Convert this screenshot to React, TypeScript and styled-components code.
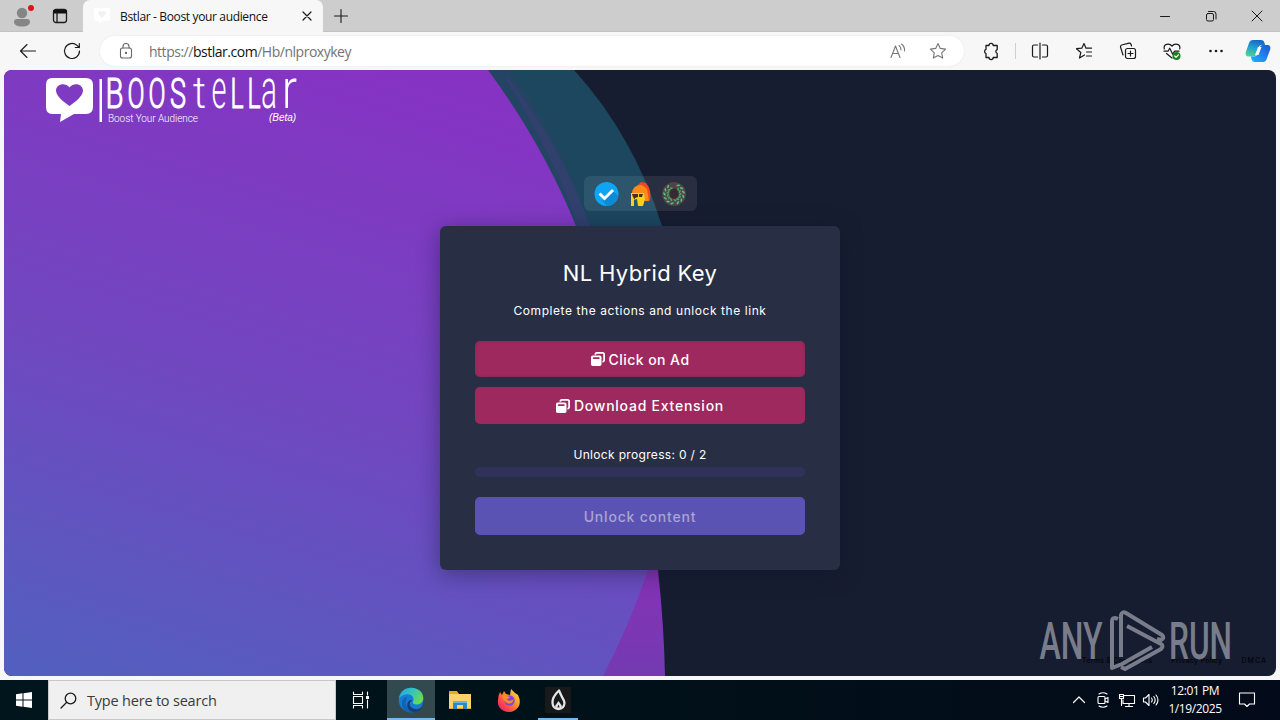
import type { ReactNode } from "react";
import { FaWindowRestore } from "react-icons/fa6";
import styled, { createGlobalStyle } from "styled-components";

const GlobalStyle = createGlobalStyle`
  * {
    box-sizing: border-box;
  }

  body {
    margin: 0;
    overflow: hidden;
    font-family: "Open Sans", "Noto Sans", sans-serif;
  }

  svg {
    display: block;
    flex: none;
  }
`;

const Desktop = styled.div`
  display: flex;
  flex-direction: column;
  width: 1280px;
  height: 720px;
  background: #f7f7f7;
`;

/* browser chrome */

const TabStrip = styled.header`
  display: flex;
  height: 32px;
  background: #cdcdcd;
  box-shadow: inset 0 -1px #c2c2c2;
`;

const Slot = styled.div<{ $width: number }>`
  display: flex;
  flex: none;
  align-items: center;
  justify-content: center;
  width: ${({ $width }) => $width}px;
`;

const Tab = styled.div`
  display: flex;
  align-items: center;
  width: 240px;
  padding: 0 10px 0 11px;
  background: #f7f7f7;
  border-radius: 7px 7px 0 0;
`;

const TabTitle = styled.span`
  flex: 1;
  margin-left: 10px;
  font-size: 12px;
  letter-spacing: -0.35px;
  white-space: nowrap;
  color: #111;
`;

const WindowButtons = styled.div`
  display: flex;
  margin-left: auto;
`;

const Toolbar = styled.div`
  display: flex;
  align-items: center;
  height: 38px;
  padding-left: 6px;
`;

const AddressBar = styled.div`
  display: flex;
  align-items: center;
  width: 864px;
  height: 30px;
  margin-left: 6px;
  padding: 0 6px 0 8px;
  border-radius: 15px;
  background: #fff;
  box-shadow: 0 0 2px #e2e2e2;
`;

const Url = styled.span`
  flex: 1;
  margin-left: 5px;
  font-size: 14px;
  letter-spacing: -0.48px;
  color: #737373;

  & b {
    font-weight: 400;
    color: #111;
  }
`;

const Separator = styled.i`
  width: 1px;
  height: 16px;
  margin: 0 1px 0 -3px;
  background: #cfcfcf;
`;

/* web page */

const Page = styled.main`
  position: relative;
  display: flex;
  flex-direction: column;
  align-items: center;
  height: 606px;
  margin: 0 4px 4px;
  padding-top: 106px;
  border-radius: 8px;
  overflow: hidden;
  background: #171d31;
  color: #fff;
`;

const Backdrop = styled.svg`
  position: absolute;
  inset: 0;
`;

const Brand = styled.svg`
  position: absolute;
  top: 0;
  left: 36px;
  overflow: visible;
`;

const Badges = styled.div`
  position: relative;
  display: flex;
  align-items: center;
  gap: 8px;
  width: 113px;
  height: 35px;
  padding: 0 10px;
  border-radius: 6px;
  background: rgba(255, 255, 255, 0.08);
`;

const Card = styled.section`
  position: relative;
  display: flex;
  flex-direction: column;
  width: 400px;
  height: 344px;
  margin-top: 15px;
  padding: 32px 35px 0;
  border-radius: 6px;
  background: #282f45;
  box-shadow: 0 4px 22px rgba(10, 14, 40, 0.4);
  text-align: center;
`;

const Title = styled.h1`
  margin: 0;
  font-family: Inter, sans-serif;
  font-size: 22px;
  font-weight: 400;
  line-height: 30px;
  letter-spacing: 0.35px;
`;

const Text = styled.p`
  margin: 0;
  font-family: Inter, sans-serif;
  font-size: 12px;
  line-height: 16px;
  letter-spacing: 0.33px;
`;

const Subtitle = styled(Text)`
  margin: 15px 0 22px;
  letter-spacing: 0.57px;
`;

const ActionButton = styled.button<{ $pressed?: boolean }>`
  display: flex;
  flex: none;
  align-items: center;
  justify-content: center;
  gap: 4px;
  height: ${({ $pressed }) => ($pressed ? 36 : 37)}px;
  margin: 0 0 10px;
  padding: 0;
  border: 0;
  border-radius: 5px;
  background: #9e295f;
  box-shadow: ${({ $pressed }) =>
    $pressed ? "inset 0 0 3px #7c2a50" : "none"};
  font-family: Inter, sans-serif;
  font-size: 14px;
  font-weight: 500;
  letter-spacing: ${({ $pressed }) => ($pressed ? 0.45 : 0.75)}px;
  color: #fff;
`;

const Progress = styled(Text)`
  margin-top: 13px;
`;

const ProgressBar = styled.div`
  flex: none;
  height: 10px;
  margin: 4px 0 20px;
  border-radius: 5px;
  background: #30325a;
`;

const UnlockButton = styled(ActionButton)`
  height: 38px;
  background: #5b53b4;
  letter-spacing: 0.8px;
  color: #aaa4d3;
`;

const FooterLinks = styled.footer`
  display: flex;
  align-self: flex-end;
  gap: 19px;
  margin: auto 9px 10px 0;
  font-family: Inter, sans-serif;
  font-size: 7px;
  font-weight: 600;
  line-height: 11px;
  letter-spacing: 0.25px;
  color: #05070d;

  & span:last-child {
    letter-spacing: 1px;
  }
`;

const Watermark = styled.svg`
  position: absolute;
  right: 40px;
  bottom: 0;
`;

/* taskbar */

const Taskbar = styled.nav`
  display: flex;
  height: 40px;
  background: linear-gradient(90deg, #00151c, #001219 40%, #030a19);
  color: #fff;
`;

const SearchBox = styled.div`
  display: flex;
  align-items: center;
  gap: 10px;
  width: 288px;
  padding-left: 11px;
  border: 1px solid #c8c8c8;
  background: #f0f0f0;
  font-size: 14.5px;
  letter-spacing: -0.2px;
  color: #3a3a3a;
`;

const TaskButton = styled.div<{ $active?: boolean; $running?: boolean }>`
  display: flex;
  align-items: center;
  justify-content: center;
  width: 48px;
  margin-right: 1px;
  background: ${({ $active }) => ($active ? "#334950" : "transparent")};
  background-image: ${({ $active, $running }) =>
    $active || $running ? "linear-gradient(#76b9ed, #76b9ed)" : "none"};
  background-repeat: no-repeat;
  background-position: bottom;
  background-size: ${({ $active }) => ($active ? "48px" : "40px")} 2px;
`;

const Tray = styled.div`
  display: flex;
  margin-left: auto;
  padding-right: 5px;
`;

const Clock = styled.div`
  display: flex;
  flex-direction: column;
  align-items: center;
  width: 64px;
  padding-top: 2px;
  font-size: 12px;
  line-height: 18px;
  letter-spacing: -0.4px;
  white-space: nowrap;
`;

interface IconProps {
  width?: number;
  height?: number;
  color?: string;
  stroke?: number;
  children: ReactNode;
}

const Icon = ({
  width = 20,
  height = 20,
  color = "#1b1b1b",
  stroke = 1.1,
  children,
}: IconProps) => (
  <svg
    width={width}
    height={height}
    viewBox={`0 0 ${width} ${height}`}
    fill="none"
    stroke={color}
    strokeWidth={stroke}
    strokeLinecap="round"
    strokeLinejoin="round"
  >
    {children}
  </svg>
);

const starPath =
  "M10 2.5l2.3 4.9 5.3.7-3.9 3.7 1 5.3-4.7-2.6-4.7 2.6 1-5.3-3.9-3.7 5.3-.7z";

const BrowserTabs = () => (
  <TabStrip>
    <Slot $width={44}>
      <Icon width={28} height={28} stroke={0}>
        <circle cx="14" cy="11" r="5.2" fill="#858585" />
        <path d="M6 20c0-2 1-3 3-3h10c2 0 3 1 3 3 0 3-4 4.600-8 4.600S6 23 6 20z" fill="#858585" />
        <circle cx="23" cy="6" r="3" fill="#d9161c" />
      </Icon>
    </Slot>
    <Slot $width={32}>
      <Icon width={16} height={16} stroke={1.3}>
        <rect x="1.500" y="1.500" width="13" height="13" rx="2.500" />
        <path d="M2 3h12M2 4.500h12" stroke="#111" strokeWidth="2" />
        <path d="M5 5v9" />
      </Icon>
    </Slot>
    <Slot $width={7} />
    <Tab>
      <Icon width={16} height={16} stroke={0}>
        <path d="M2 0h12q2 0 2 2v9q0 2-2 2H9l-4 3v-3H2q-2 0-2-2V2q0-2 2-2z" fill="#fff" />
        <path d="M8 10L4.500 6.500Q3.500 3 6.500 3L8 4.200 9.500 3q3 0 2 3.500z" fill="#f3f0f5" />
      </Icon>
      <TabTitle>Bstlar - Boost your audience</TabTitle>
      <Icon width={12} height={12} stroke={1.2}>
        <path d="M2 2l8 8M10 2l-8 8" />
      </Icon>
    </Tab>
    <Slot $width={36}>
      <Icon width={16} height={16}>
        <path d="M8 1.500v13M1.500 8h13" />
      </Icon>
    </Slot>
    <WindowButtons>
      <Slot $width={46}>
        <Icon width={12} height={12} stroke={1}>
          <path d="M1.500 6.500h9" />
        </Icon>
      </Slot>
      <Slot $width={46}>
        <Icon width={12} height={12} stroke={1}>
          <rect x="1.500" y="3.500" width="7" height="7.500" rx="1.500" />
          <path d="M3.500 1.500h5q2.500 0 2.500 2.500v5" />
        </Icon>
      </Slot>
      <Slot $width={46}>
        <Icon width={12} height={12} stroke={1}>
          <path d="M1 1l10 10M11 1L1 11" />
        </Icon>
      </Slot>
    </WindowButtons>
  </TabStrip>
);

const Copilot = () => (
  <svg width="26" height="24" viewBox="0 0 26 24">
    <defs>
      <linearGradient id="copilotLeft" x1="0.5" y1="0" x2="0.2" y2="1">
        <stop offset="0" stopColor="#1668c8" />
        <stop offset="0.5" stopColor="#21a6cf" />
        <stop offset="1" stopColor="#52d58b" />
      </linearGradient>
      <linearGradient id="copilotRight" x1="1" y1="0" x2="0" y2="1">
        <stop offset="0" stopColor="#1c59c9" />
        <stop offset="0.5" stopColor="#2382f0" />
        <stop offset="1" stopColor="#14b8f5" />
      </linearGradient>
    </defs>
    <path d="M8 1h8c2 0 3 1 3.500 3l.7 2H17c-2 0-3 1-3.500 2.500L11 16c-.5 1-1.500 1.500-2.500 1.500H4c-3 0-4-2-3-5L4 4c.7-2 2-3 4-3z" fill="url(#copilotLeft)" />
    <path d="M18 23h-8c-2 0-3-1-3.500-3l-.7-2.500H9c2 0 3-1 3.500-2.500L15 8c.5-1.300 1.500-2 2.500-2H22c3 0 4 2 3 5l-3 8c-.7 2.500-2 4-4 4z" fill="url(#copilotRight)" />
    <path d="M13 8h3.500L13.500 16h-3.500z" fill="#f7f7f7" />
  </svg>
);

const BrowserToolbar = () => (
  <Toolbar>
    <Slot $width={44}>
      <Icon>
        <path d="M17.500 10H2.500M9 3.500L2.500 10 9 16.500" />
      </Icon>
    </Slot>
    <Slot $width={44}>
      <Icon stroke={1.2}>
        <path d="M17.500 10A7.500 7.500 0 1 1 15 4.400L17.300 6.500M17.300 2.500v4h-4" />
      </Icon>
    </Slot>
    <AddressBar>
      <Slot $width={36}>
        <Icon color="#666">
          <rect x="4.500" y="7" width="11" height="10" rx="2" />
          <path d="M7 7V5.500a3 3 0 0 1 6 0V7" />
          <circle cx="10" cy="12" r=".6" fill="#666" />
        </Icon>
      </Slot>
      <Url>
        https://<b>bstlar.com</b>/Hb/nlproxykey
      </Url>
      <Slot $width={40}>
        <Icon color="#777">
          <path d="M3 16.500L7.500 5 12 16.500M4.500 12.500h6M11 4.500c1.500 1 2 2.500 2 4.500M13.500 3c2.500 2 3.300 4 3 7" />
        </Icon>
      </Slot>
      <Slot $width={40}>
        <Icon color="#777">
          <path d={starPath} />
        </Icon>
      </Slot>
    </AddressBar>
    <Slot $width={54}>
      <Icon stroke={1.3}>
        <path d="M5 4.500h3a2.100 2.100 0 0 1 4.200 0h4v4.200a2 2 0 0 0 0 3.800v4h-4a2.100 2.100 0 0 1-4.200 0H5v-4a2.200 2.200 0 0 1 0-4.100z" />
      </Icon>
    </Slot>
    <Separator />
    <Slot $width={45}>
      <Icon stroke={1.2}>
        <path d="M7.500 4H4Q2.500 4 2.500 5.500v9Q2.500 16 4 16h3.500M12.500 4H16q1.500 0 1.500 1.500v9q0 1.500-1.500 1.500h-3.500M10 2v16" />
      </Icon>
    </Slot>
    <Slot $width={44}>
      <Icon stroke={1.2}>
        <path d="M10.500 14l-5 3 1.300-5.500-4.300-3.800 5.300-.5L10 2.500l2 4.700h5.500M12.500 11H17.500M12.500 15H17.500" />
      </Icon>
    </Slot>
    <Slot $width={44}>
      <Icon stroke={1.2}>
        <path d="M5 14L2.500 6Q2.200 4.500 3.700 4L11 2.200q1.500-.3 2 1L13.500 5" />
        <rect x="7.500" y="7.500" width="10" height="10" rx="2" />
        <path d="M12.500 10v5M10 12.500h5" />
      </Icon>
    </Slot>
    <Slot $width={44}>
      <Icon stroke={1.2}>
        <path d="M2.300 8C1 3 7 1.500 10 5c3-3.500 9-2 7.700 3M2 10.200h4l1.700-3 3 6 2-3H17M4.500 12.500L10 17" />
        <circle cx="14.500" cy="15" r="4" fill="#19811d" stroke="none" />
        <path d="M12.700 15l1.300 1.300 2.400-2.500" stroke="#fff" />
      </Icon>
    </Slot>
    <Slot $width={44}>
      <Icon>
        <g fill="#1b1b1b" stroke="none">
          <circle cx="4.500" cy="10" r="1.300" />
          <circle cx="10" cy="10" r="1.300" />
          <circle cx="15.500" cy="10" r="1.300" />
        </g>
      </Icon>
    </Slot>
    <Slot $width={40}>
      <Copilot />
    </Slot>
  </Toolbar>
);

const PageBackdrop = () => (
  <Backdrop width="1272" height="606" viewBox="4 70 1272 606">
    <defs>
      <linearGradient id="blob" gradientUnits="userSpaceOnUse" x1="400" y1="70" x2="200" y2="730">
        <stop offset="0" stopColor="#8633c3" />
        <stop offset="0.5" stopColor="#7147c0" />
        <stop offset="1" stopColor="#5260bf" />
      </linearGradient>
      <linearGradient id="crescent" x1="0" y1="0" x2="0" y2="1">
        <stop offset="0.6" stopColor="#8632b5" />
        <stop offset="1" stopColor="#743ab2" />
      </linearGradient>
    </defs>
    <path d="M480 70h94q60 66 88 156v60H560z" fill="#1c475f" />
    <path d="M488 70h22q52 70 80 156h-20z" fill="#2a4368" opacity="0.6" />
    <path d="M504 76q8 4 14 14 48 68 72 136h-12Q556 160 504 76z" fill="#34406f" opacity="0.8" />
    <path d="M600 400h34q18 80 24 170 6 55 7 106h-70z" fill="url(#crescent)" />
    <path d="M4 70h484q55 75 88 156 50 130 76 334l-4 10q-18 54-45 106H4z" fill="url(#blob)" />
  </Backdrop>
);

interface Letter {
  char: string;
  x: number;
  width: number;
  stretch?: number;
}

const brandLetters: Letter[] = [
  { char: "B", x: 65.5, width: 18 },
  { char: "O", x: 87.5, width: 17 },
  { char: "O", x: 108.5, width: 17 },
  { char: "S", x: 130, width: 16 },
  { char: "t", x: 153, width: 13, stretch: 1.04 },
  { char: "e", x: 171.5, width: 15, stretch: 1.3 },
  { char: "L", x: 190.5, width: 13 },
  { char: "L", x: 207.5, width: 13 },
  { char: "a", x: 221, width: 16, stretch: 1.3 },
  { char: "r", x: 242, width: 15, stretch: 1.3 },
];

const BrandLogo = () => (
  <Brand width="270" height="60" fill="#fff">
    <path
      fillRule="evenodd"
      d="M12 8h34q7 0 7 7v22q0 7-7 7H34L20 52l1-8h-9q-6 0-6-7V15q0-7 6-7zM29.500 36C23 31 17 27 16 21c0-7 9-9 13.500-3.500C34 12 43 14 43 21c-1 6-7 10-13.500 15z"
    />
    <rect x="59.500" y="9" width="2.500" height="43" />
    <g fontFamily="Roboto, sans-serif" fontSize="42" fontWeight="300" stroke="#fff">
      {brandLetters.map(({ char, x, width, stretch }) => (
        <text
          key={x}
          transform={`translate(${x} 38) scale(1 ${stretch ?? 1})`}
          textLength={width}
          lengthAdjust="spacingAndGlyphs"
          strokeWidth={stretch ? 0 : 1.2}
        >
          {char}
        </text>
      ))}
    </g>
    <g fontFamily="Roboto, sans-serif" fontSize="10">
      <text x="68" y="51.500" textLength="90" fontWeight="300">
        Boost Your Audience
      </text>
      <text x="229" y="50.500" textLength="27" fontStyle="italic" fontFamily="Liberation Sans">
        (Beta)
      </text>
    </g>
  </Brand>
);

const VerifiedBadge = () => (
  <svg width="25" height="26" viewBox="0 0 25 26">
    <circle cx="12.500" cy="13" r="12" fill="#0ea5f5" />
    <path d="M17 8l7 7a12 12 0 0 1-11 10l-5-6z" fill="#098bd8" />
    <path d="M5.500 12.500l5 5 8.500-8.500" fill="none" stroke="#fff" strokeWidth="3" />
  </svg>
);

const HelmetBadge = () => (
  <svg width="26" height="26" viewBox="0 0 26 26">
    <path d="M10 5L14 1l5 1q6 7 4 18l-4-4-3-11z" fill="#ef4a22" />
    <path d="M5 12q1-8 9-8 7 2 7 10l1 6h-4l-5-6z" fill="#fb8a17" />
    <path d="M4 12h13l1 6-2 7h-5l-1-7-3 1v6H4z" fill="#f9d119" />
    <path d="M5 13h6v3l-3 1v2L6 16zM12 13h4l-1 3h-3z" fill="#47301c" />
  </svg>
);

const leafAngles = [32, 58, 84, 110, 136, 162, 198, 224, 250, 276, 302, 328];

const LaurelBadge = () => (
  <svg width="26" height="26" viewBox="0 0 26 26">
    <circle cx="13" cy="13" r="12" fill="#514449" />
    {leafAngles.map((angle) => (
      <g key={angle} transform={`rotate(${angle} 13 13)`}>
        <ellipse cx="12" cy="3.500" rx="0.900" ry="1.900" fill="#62b67a" transform="rotate(50 12 3.500)" />
        <ellipse cx="14" cy="6.800" rx="0.800" ry="1.800" fill="#45a966" transform="rotate(-40 14 6.800)" />
      </g>
    ))}
    <ellipse cx="13" cy="12.500" rx="4.300" ry="5.300" fill="#3a2833" />
  </svg>
);

const AnyRunWatermark = () => (
  <Watermark width="200" height="70" fill="#8b8e9b" opacity="0.85">
    <g fontFamily="Roboto, sans-serif" fontSize="51" fontWeight="500">
      <text x="3.500" y="53" textLength="63" lengthAdjust="spacingAndGlyphs">
        ANY
      </text>
      <text x="133" y="53" textLength="63" lengthAdjust="spacingAndGlyphs">
        RUN
      </text>
    </g>
    <g fill="none" stroke="#8b8e9b" strokeWidth="4" strokeLinejoin="round">
      <path d="M82 13q-6-3-6 3v46l10-4 30-17" />
      <path d="M85 51V9q1-4 5-2l36 22q3 3-1 5l-4-1" />
      <path d="M91 20l34 18q3 2 0 5L89 63l-4-2" />
    </g>
  </Watermark>
);

const EdgeIcon = () => (
  <svg width="26" height="26" viewBox="0 0 26 26">
    <defs>
      <linearGradient id="edgeTop" x1="0" y1="0" x2="1" y2=".5">
        <stop offset="0" stopColor="#2a9edb" />
        <stop offset="0.5" stopColor="#2fc3c5" />
        <stop offset="1" stopColor="#67d957" />
      </linearGradient>
    </defs>
    <circle cx="13" cy="13" r="12.300" fill="#157cd0" />
    <path d="M1 12C2 4 7 .7 13 .7c8 0 12.300 5.300 12.300 10.300 0 4-3 6.500-6.500 6.500-3 0-4.500-1-4-2.500 3-5-3-9-7-7.500C4 8 2 10 1 12z" fill="url(#edgeTop)" />
    <path d="M9 10c-3 5-1 12 5 15-5 1-10-2-10-8s4-7 5-7z" fill="#1262b5" />
    <path d="M14 14c-3 0-4 7 3 8 3 .5 5-.5 7-2-2 4-5 5.500-9 5-5-1-7-6-5-10 1-2 4-3 4-1z" fill="#153f78" />
  </svg>
);

const FolderIcon = () => (
  <svg width="24" height="22" viewBox="0 0 24 22">
    <path d="M1 2h8l2 3h12v15H1z" fill="#e8a925" />
    <path d="M1 5h22v14H1z" fill="#fbd36b" />
    <path d="M5 12h14v8h-4v-4H9v4H5z" fill="#2e87cc" />
    <path d="M5 12h14v2H5z" fill="#66b3e5" />
  </svg>
);

const FirefoxIcon = () => (
  <svg width="24" height="24" viewBox="0 0 24 24">
    <defs>
      <linearGradient id="fox" x1="1" y1="0" x2="0" y2="1">
        <stop offset="0" stopColor="#fff14d" />
        <stop offset="0.4" stopColor="#ff9525" />
        <stop offset="0.75" stopColor="#ff3a53" />
        <stop offset="1" stopColor="#e31587" />
      </linearGradient>
    </defs>
    <path d="M3 4l2 3 2-4 2 3 4 1 1-6 4 4 3 2q3 6 1 11-4 6-10 6C4 24 0 18 1 12q0-4 2-8z" fill="url(#fox)" />
    <circle cx="12.500" cy="12.500" r="5.200" fill="#8048d7" />
    <path d="M5 7l6 1 2 2q-3 0-3 2 4 2 7-1-2 6-7 4-4-2-5-8z" fill="#ff8a22" />
  </svg>
);

const FlameIcon = () => (
  <svg width="26" height="26" viewBox="0 0 26 26">
    <path d="M0 0h26v26H0z" fill="#17191b" />
    <path d="M14 3.500Q7 10 7.500 16q.5 6 6 6t6-6q-.5-3-2-5-2-4-3.500-7.500z" fill="none" stroke="#e5e5e5" strokeWidth="2.300" strokeLinejoin="round" />
    <path d="M13.500 14l-3.500 5q1 3 3.500 3t3.500-3zM13.500 17.500l1.200 3h-2.400z" fill="#e5e5e5" fillRule="evenodd" />
  </svg>
);

const WindowsTaskbar = () => (
  <Taskbar>
    <Slot $width={48}>
      <svg width="16" height="16" fill="#fff">
        <path d="M0 2.200L6.500 1.300v6.200H0zM7.500 1.200L16 0v7.500H7.500zM0 8.500h6.500v6.200L0 13.800zM7.500 8.500H16V16l-8.500-1.200z" />
      </svg>
    </Slot>
    <SearchBox>
      <Icon width={17} height={17} stroke={1.3}>
        <circle cx="10.500" cy="6.500" r="5.300" />
        <path d="M6.500 10.500L1 16" />
      </Icon>
      Type here to search
    </SearchBox>
    <Slot $width={51}>
      <Icon width={22} height={18} color="#fff">
        <path d="M2.500 1v2.500h9V1M2.500 17v-2.500h9V17M2.500 5.500h9v7h-9zM16.500 1v3M16.500 9v8" />
        <path d="M15.500 5.500h2v2h-2z" fill="#fff" />
      </Icon>
    </Slot>
    <TaskButton $active>
      <EdgeIcon />
    </TaskButton>
    <TaskButton>
      <FolderIcon />
    </TaskButton>
    <TaskButton>
      <FirefoxIcon />
    </TaskButton>
    <TaskButton $running>
      <FlameIcon />
    </TaskButton>
    <Tray>
      <Slot $width={24}>
        <Icon width={14} height={14} color="#fff" stroke={1.2}>
          <path d="M1.500 9.500L7 4l5.500 5.500" />
        </Icon>
      </Slot>
      <Slot $width={24}>
        <Icon width={16} height={18} color="#fff">
          <rect x="3" y="5.500" width="7" height="7" rx="1" />
          <path d="M10 8l3-1.500v5L10 10M4 3q4-2.500 8 0M4 15q4 2.500 8 0" />
        </Icon>
      </Slot>
      <Slot $width={24}>
        <Icon width={18} height={16} color="#fff">
          <path d="M6 3.500h10.500v8H5V8M11 11.500v3M7.500 14.500h7M1.500 2.500h4v4h-4zM3.500 6.500v7M2 4.500h3" />
        </Icon>
      </Slot>
      <Slot $width={24}>
        <Icon width={18} height={16} color="#fff">
          <path d="M1.500 6h2L7 2.500v11L3.500 10h-2zM9.500 6q1.500 2 0 4M11.800 4.500q2.700 3.500 0 7M14 3q4 5 0 10" />
        </Icon>
      </Slot>
      <Clock>
        <span>12:01 PM</span>
        <span>1/19/2025</span>
      </Clock>
      <Slot $width={40}>
        <Icon width={18} height={18} color="#fff">
          <path d="M1.500 2h15v11h-5L9 15.500 6.500 13h-5z" />
        </Icon>
      </Slot>
      <Slot $width={8} />
    </Tray>
  </Taskbar>
);

const App = () => (
  <Desktop>
    <GlobalStyle />
    <BrowserTabs />
    <BrowserToolbar />
    <Page>
      <PageBackdrop />
      <BrandLogo />
      <Badges>
        <VerifiedBadge />
        <HelmetBadge />
        <LaurelBadge />
      </Badges>
      <Card>
        <Title>NL Hybrid Key</Title>
        <Subtitle>Complete the actions and unlock the link</Subtitle>
        <ActionButton $pressed>
          <FaWindowRestore size={14} />
          Click on Ad
        </ActionButton>
        <ActionButton>
          <FaWindowRestore size={14} />
          Download Extension
        </ActionButton>
        <Progress>Unlock progress: 0 / 2</Progress>
        <ProgressBar />
        <UnlockButton>Unlock content</UnlockButton>
      </Card>
      <FooterLinks>
        <span>Terms &amp; Conditions</span>
        <span>Privacy Policy</span>
        <span>DMCA</span>
      </FooterLinks>
      <AnyRunWatermark />
    </Page>
    <WindowsTaskbar />
  </Desktop>
);

export default App;
